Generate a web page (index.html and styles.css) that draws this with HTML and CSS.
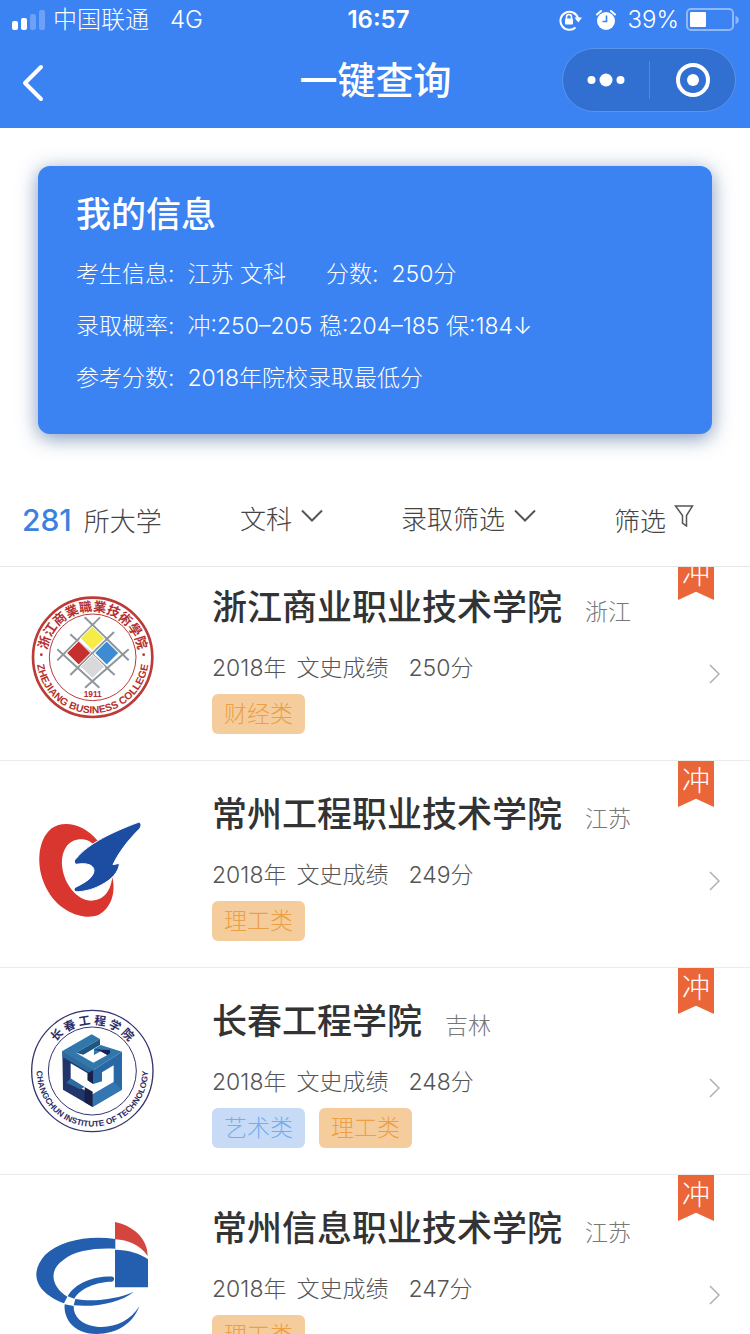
FILE: index.html
```html
<!DOCTYPE html>
<html lang="zh-CN">
<head>
    <meta charset="UTF-8">
    <meta name="viewport" content="width=device-width, initial-scale=1.0">
    <title>一键查询</title>
    <link rel="stylesheet" href="styles.css">
</head>
<body>
    <header class="header">
        <div class="status-bar">
            <div class="status-left">
                <svg class="signal" width="34" height="20" viewBox="0 0 34 20" fill="#fff">
                    <rect x="0" y="11" width="6" height="9" rx="2"/>
                    <rect x="9" y="8" width="6" height="12" rx="2"/>
                    <rect x="18" y="4" width="6" height="16" rx="2" opacity="0.25"/>
                    <rect x="27" y="0" width="6" height="20" rx="2" opacity="0.25"/>
                </svg>
                <span class="carrier">中国联通</span>
                <span class="network">4G</span>
            </div>
            <div class="status-time">16:57</div>
            <div class="status-right">
                <svg width="24" height="22" viewBox="0 0 24 22" fill="none" stroke="#fff" stroke-width="2">
                    <path d="M16.500 18.500A9 9 0 1 1 19 9"/>
                    <path d="M15.500 8.500H23L19.300 13.500Z" fill="#fff" stroke="none"/>
                    <rect x="6" y="9.500" width="8" height="6" rx="1" fill="#fff" stroke="none"/>
                    <path d="M7.500 10V8a2.500 2.500 0 0 1 5 0v2" stroke-width="1.500"/>
                </svg>
                <svg class="alarm" width="20" height="22" viewBox="0 0 20 22">
                    <circle cx="10" cy="12" r="9" fill="#fff"/>
                    <path d="M1 5.500L5 2M19 5.500L15 2" stroke="#fff" stroke-width="2" stroke-linecap="round"/>
                    <path d="M10.500 6.500V12.500H6.500" fill="none" stroke="#3b82f3" stroke-width="1.600"/>
                </svg>
                <span class="percent">39%</span>
                <svg width="53" height="24" viewBox="0 0 53 24">
                    <rect x="1" y="1" width="46" height="21" rx="4" fill="none" stroke="#8fb8fa" stroke-width="2"/>
                    <rect x="4" y="4" width="16" height="15" rx="1" fill="#fff"/>
                    <path d="M49.500 8C54 9 54 15 49.500 16Z" fill="#8fb8fa"/>
                </svg>
            </div>
        </div>
        <nav class="nav-bar">
            <button class="back-btn" aria-label="返回">
                <svg width="24" height="38" viewBox="0 0 24 38" fill="none" stroke="#fff" stroke-width="4" stroke-linecap="round" stroke-linejoin="round">
                    <path d="M20 3L4 19L20 35"/>
                </svg>
            </button>
            <h1>一键查询</h1>
            <div class="capsule">
                <button aria-label="更多">
                    <svg width="38" height="14" viewBox="0 0 38 14" fill="#fff">
                        <circle cx="4.500" cy="7" r="4"/>
                        <circle cx="19" cy="7" r="6.500"/>
                        <circle cx="33.500" cy="7" r="4"/>
                    </svg>
                </button>
                <button aria-label="关闭">
                    <svg width="34" height="34" viewBox="0 0 34 34">
                        <circle cx="17" cy="17" r="15" fill="none" stroke="#fff" stroke-width="4"/>
                        <circle cx="17" cy="17" r="6" fill="#fff"/>
                    </svg>
                </button>
            </div>
        </nav>
    </header>

    <section class="info-card">
        <h2>我的信息</h2>
        <div class="info-row">
            <span class="info-label">考生信息:</span><span>江苏 文科</span>
            <span class="info-label second">分数:</span><span>250分</span>
        </div>
        <div class="info-row">
            <span class="info-label">录取概率:</span><span>冲:250–205 稳:204–185 保:184↓</span>
        </div>
        <div class="info-row">
            <span class="info-label">参考分数:</span><span>2018年院校录取最低分</span>
        </div>
    </section>

    <div class="filter-bar">
        <div class="count"><strong>281</strong>所大学</div>
        <div class="filter">
            <select aria-label="科类"><option>文科</option></select>
            <svg width="22" height="14" viewBox="0 0 22 14" fill="none" stroke="#555" stroke-width="2"><path d="M1 1.500L11 11.500L21 1.500"/></svg>
        </div>
        <div class="filter">
            <select aria-label="录取筛选"><option>录取筛选</option></select>
            <svg width="22" height="14" viewBox="0 0 22 14" fill="none" stroke="#555" stroke-width="2"><path d="M1 1.500L11 11.500L21 1.500"/></svg>
        </div>
        <button class="filter">
            筛选
            <svg width="20" height="22" viewBox="0 0 20 22" fill="none" stroke="#555" stroke-width="1.500"><path d="M1.500 1H18.500L12.500 10.500V21L8.500 18V10.500Z"/></svg>
        </button>
    </div>

    <main class="list-wrap">
        <ul class="school-list">
            <li class="school">
                <svg class="logo" viewBox="30 30 372 372">
                    <defs>
                        <path id="zj-top" d="M80 217A138 138 0 0 1 356 217"/>
                        <path id="zj-bottom" d="M50 217A168 168 0 0 0 386 217"/>
                    </defs>
                    <circle cx="218" cy="217" r="179" fill="#fff" stroke="#bc3a38" stroke-width="8"/>
                    <circle cx="218" cy="217" r="130" fill="none" stroke="#bc3a38" stroke-width="3"/>
                    <g stroke="#8f979c" stroke-width="6">
                        <path d="M240 97L112 226M282 141L151 270M326 193L195 308M194 97L326 226M151 148L284 270M112 193L238 308"/>
                    </g>
                    <g stroke="#fff" stroke-width="3">
                        <path d="M217 124L254 160L217 196L181 160Z" fill="#f5ec45"/>
                        <path d="M176 168L212 204L176 240L140 204Z" fill="#c5302e"/>
                        <path d="M260 168L296 204L260 240L224 204Z" fill="#3d8bd3"/>
                        <path d="M217 209L254 245L217 280L181 245Z" fill="#d9d9dc"/>
                    </g>
                    <g fill="#b5302e">
                        <text class="seal-cn" font-size="39"><textPath href="#zj-top" startOffset="50%">浙江商業職業技術學院</textPath></text>
                        <text class="seal-en" font-size="31"><textPath href="#zj-bottom" startOffset="50%">ZHEJIANG BUSINESS COLLEGE</textPath></text>
                        <text class="seal-en" font-size="25" x="218" y="337">1911</text>
                        <circle cx="64" cy="209" r="4"/>
                        <circle cx="371" cy="209" r="4"/>
                    </g>
                </svg>
                <div class="detail">
                    <div class="title"><h3>浙江商业职业技术学院</h3><span class="region">浙江</span></div>
                    <p class="meta"><span>2018年</span><span class="subject">文史成绩</span><span>250分</span></p>
                    <div class="tags"><span class="tag">财经类</span></div>
                </div>
                <svg class="arrow" viewBox="0 0 12 22"><path d="M2 2L11 11L2 20"/></svg>
                <span class="ribbon">冲</span>
            </li>
            <li class="school">
                <svg class="logo" viewBox="30 6 372 372">
                    <path fill="#d9362f" d="M233 122C190 70 130 60 95 85C50 120 45 210 85 275C120 335 190 362 235 345C275 325 288 275 277 232C272 270 255 300 215 302C170 302 130 250 126 195C124 150 145 120 180 118C200 118 210 124 218 131Z"/>
                    <path fill="#1d4da3" stroke="#fff" stroke-width="3" d="M355 67C366 68 365 80 357 88C320 125 295 160 279 194L298 190C297 215 275 240 240 257C215 270 185 276 168 275C160 272 161 264 170 260C200 245 220 232 222 212C222 195 200 187 168 193C161 187 162 180 170 174C205 130 280 95 355 67Z"/>
                </svg>
                <div class="detail">
                    <div class="title"><h3>常州工程职业技术学院</h3><span class="region">江苏</span></div>
                    <p class="meta"><span>2018年</span><span class="subject">文史成绩</span><span>249分</span></p>
                    <div class="tags"><span class="tag">理工类</span></div>
                </div>
                <svg class="arrow" viewBox="0 0 12 22"><path d="M2 2L11 11L2 20"/></svg>
                <span class="ribbon">冲</span>
            </li>
            <li class="school">
                <svg class="logo" viewBox="30 27 372 372">
                    <defs>
                        <path id="cc-top" d="M77 213A140 140 0 0 1 357 213"/>
                        <path id="cc-bottom" d="M50 213A167 167 0 0 0 384 213"/>
                    </defs>
                    <circle cx="217" cy="213" r="182" fill="#fff" stroke="#34346f" stroke-width="4"/>
                    <circle cx="217" cy="213" r="132" fill="none" stroke="#34346f" stroke-width="3"/>
                    <path fill="#3277ac" d="M127 153L215 103L240 117L168 158L220 188L262 165L242 154L222 165V147L242 135L306 155L220 210Z"/>
                    <path fill="#1d5684" d="M168 158L240 117V135L190 164Z"/>
                    <path fill="#1a2253" d="M220 147L242 154L262 165L270 160V150L245 149Z"/>
                    <path fill="#20366b" d="M127 153L220 210V252L203 241V220L152 190V246L218 285V321L129 269Z"/>
                    <path fill="#2b6b9f" d="M127 153L220 210V226L127 170Z"/>
                    <path fill="#2b6b9f" d="M152 235L194 261L180 268L139 248Z"/>
                    <path fill="#2a67a5" d="M220 210L306 155V269L218 321V283L281 246V196L246 217V244L220 252Z"/>
                    <path fill="#3b86bf" d="M218 283L281 246L306 269L218 321Z" opacity="0.5"/>
                    <path fill="#172049" d="M203 220L220 210V252L203 241ZM194 261L218 275V321L194 307Z"/>
                    <g fill="#2c2c68">
                        <text class="seal-cn" font-size="35"><textPath href="#cc-top" startOffset="50%">长 春 工 程 学 院</textPath></text>
                        <text class="seal-en" font-size="25"><textPath href="#cc-bottom" startOffset="50%">CHANGCHUN INSTITUTE OF TECHNOLOGY</textPath></text>
                    </g>
                </svg>
                <div class="detail">
                    <div class="title"><h3>长春工程学院</h3><span class="region">吉林</span></div>
                    <p class="meta"><span>2018年</span><span class="subject">文史成绩</span><span>248分</span></p>
                    <div class="tags"><span class="tag art">艺术类</span><span class="tag">理工类</span></div>
                </div>
                <svg class="arrow" viewBox="0 0 12 22"><path d="M2 2L11 11L2 20"/></svg>
                <span class="ribbon">冲</span>
            </li>
            <li class="school">
                <svg class="logo" viewBox="30 48 372 372">
                    <g fill="#235fae">
                        <path d="M286 117C210 105 120 120 75 165C30 215 40 275 132 310L142 290C100 265 80 215 130 180C165 150 230 143 286 146Z"/>
                        <path d="M278 230C220 228 165 250 143 289L163 296C180 265 230 245 276 245C284 242 284 232 278 230Z"/>
                        <path d="M166 297C220 306 290 298 342 275C300 308 230 322 161 316Z"/>
                        <path d="M134 313C130 350 155 402 230 402C290 402 340 370 358 319C330 365 280 385 230 380C185 375 160 350 161 318Z"/>
                        <path d="M285 149C325 150 360 160 384 178V262H285Z"/>
                    </g>
                    <path fill="#d5453f" d="M285 66C330 75 384 110 383 168C360 135 325 120 285 118Z"/>
                </svg>
                <div class="detail">
                    <div class="title"><h3>常州信息职业技术学院</h3><span class="region">江苏</span></div>
                    <p class="meta"><span>2018年</span><span class="subject">文史成绩</span><span>247分</span></p>
                    <div class="tags"><span class="tag">理工类</span></div>
                </div>
                <svg class="arrow" viewBox="0 0 12 22"><path d="M2 2L11 11L2 20"/></svg>
                <span class="ribbon">冲</span>
            </li>
        </ul>
    </main>
</body>
</html>
```
FILE: styles.css
```css
* {
    box-sizing: border-box;
}

body {
    font-family: Inter, "Noto Sans CJK SC", sans-serif;
    font-weight: 300;
    font-size: 23px;
    color: #444;
    background-color: #fff;
    margin: 0;
    height: 100vh;
    display: flex;
    flex-direction: column;
    overflow: hidden;
}

h1, h2, h3, p, ul {
    margin: 0;
    padding: 0;
    font-weight: 500;
}

svg {
    display: block;
    flex-shrink: 0;
}

button, select {
    font: inherit;
    color: inherit;
    background: none;
    border: none;
    padding: 0;
    cursor: pointer;
}

/* 顶部 */
.header {
    background-color: #3b82f3;
    color: #fff;
}

.status-bar {
    display: grid;
    grid-template-columns: 1fr auto 1fr;
    align-items: center;
    height: 40px;
    padding: 0 11px 0 12px;
    font-size: 24px;
    line-height: 40px;
}

.status-left, .status-right {
    display: flex;
    align-items: center;
}

.status-right {
    justify-content: flex-end;
}

.carrier {
    margin-left: 7px;
}

.network {
    margin-left: 21px;
}

.percent {
    margin: 0 7px 0 12px;
}

.alarm {
    margin-left: 13px;
}

.status-time {
    font-weight: 600;
    padding-left: 6px;
}

.nav-bar {
    display: grid;
    grid-template-columns: 1fr auto 1fr;
    align-items: center;
    padding: 8px 14px 16px 15px;
}

.back-btn {
    justify-self: start;
    padding: 6px 6px 0;
}

.nav-bar h1 {
    font-size: 38px;
    line-height: 64px;
}

.capsule {
    justify-self: end;
    display: flex;
    align-items: center;
    height: 64px;
    border: 1px solid #5a93ea;
    border-radius: 32px;
    background-color: #316fd0;
}

.capsule button {
    display: flex;
    align-items: center;
    justify-content: center;
    width: 86px;
    height: 38px;
}

.capsule button + button {
    border-left: 1px solid #5089e2;
}

/* 我的信息 */
.info-card {
    margin: 38px 38px 0;
    padding: 24px 38px 30px;
    color: #fff;
    background-color: #3b82f3;
    border-radius: 12px;
    box-shadow: 0 4px 20px rgba(40, 80, 140, 0.6);
}

.info-card h2 {
    font-size: 35px;
    line-height: 48px;
    margin-bottom: 10px;
}

.info-row {
    display: flex;
    line-height: 52px;
}

.info-label {
    margin-right: 13px;
}

.second {
    margin-left: 40px;
}

/* 筛选栏 */
.filter-bar {
    display: flex;
    justify-content: space-between;
    align-items: center;
    height: 133px;
    padding: 38px 56px 0 22px;
    border-bottom: 1px solid #e6e6e6;
    font-size: 26px;
}

.count strong {
    font-size: 30px;
    font-weight: 500;
    color: #3b82e0;
    margin-right: 12px;
}

.filter {
    display: flex;
    align-items: center;
    gap: 8px;
}

.filter svg {
    margin-bottom: 6px;
}

.filter select {
    appearance: none;
}

/* 学校列表 */
.list-wrap {
    flex: 1;
    min-height: 0;
    overflow: hidden;
}

.school-list {
    list-style: none;
    margin-top: -13px;
    font-weight: 300;
}

.school {
    position: relative;
    display: flex;
    padding: 29px 30px 26px;
    border-bottom: 1px solid #ebebeb;
}

.logo {
    width: 124px;
    height: 124px;
    margin: 12px 58px 0 0;
}

.seal-cn, .seal-en {
    text-anchor: middle;
    font-weight: 700;
}

.seal-en {
    font-family: "Liberation Sans", sans-serif;
}

.detail {
    flex: 1;
}

.title {
    display: flex;
    align-items: baseline;
    height: 48px;
    margin-bottom: 21px;
}

.title h3 {
    font-size: 35px;
    line-height: 48px;
    color: #333;
}

.region {
    margin-left: 23px;
    color: #777;
}

.meta {
    display: flex;
    line-height: 32px;
    margin-bottom: 10px;
    font-weight: 300;
    color: #555;
}

.subject {
    margin: 0 20px 0 10px;
}

.tags {
    display: flex;
    gap: 14px;
}

.tag {
    padding: 0 12px;
    line-height: 40px;
    border-radius: 6px;
    color: #ec9f45;
    background-color: #f5cd9d;
}

.tag.art {
    color: #74aeee;
    background-color: #c8dbf6;
}

.arrow {
    width: 12px;
    height: 22px;
    align-self: center;
    margin-top: 30px;
    fill: none;
    stroke: #b0b0b0;
    stroke-width: 1.5;
}

.ribbon {
    position: absolute;
    top: 0;
    right: 36px;
    width: 36px;
    height: 46px;
    font-size: 28px;
    line-height: 40px;
    text-align: center;
    color: #fff;
    background-color: #ea6538;
    clip-path: polygon(0 0, 100% 0, 100% 100%, 50% 82%, 0 100%);
}
```
